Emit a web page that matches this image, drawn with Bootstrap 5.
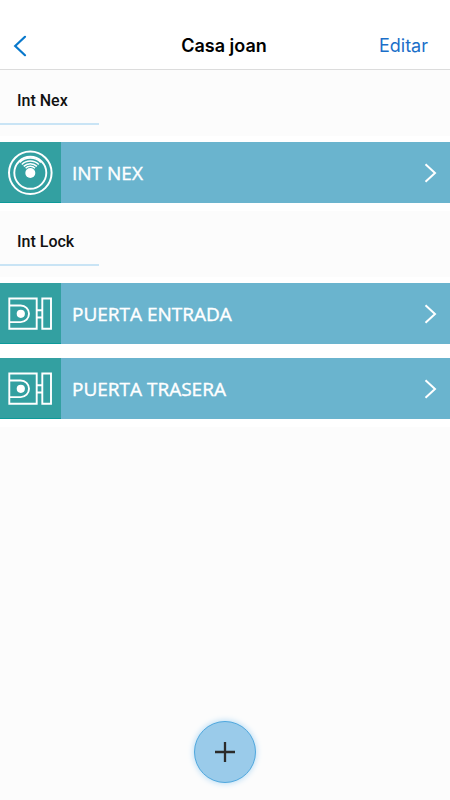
<!DOCTYPE html>
<html lang="es">
<head>
<meta charset="utf-8">
<meta name="viewport" content="width=device-width, initial-scale=1">
<title>Casa joan</title>
<link href="https://cdn.jsdelivr.net/npm/bootstrap@5.3.0/dist/css/bootstrap.min.css" rel="stylesheet">
<style>
  body { background: #fcfcfc; color: #111; }
  .top-bar { height: 70px; padding: 22px 22px 0 12px; border-bottom: 1px solid #dcdcdc; font-family: Inter, sans-serif; font-size: 18px; line-height: 24px; }
  .top-title { font-size: 18px; line-height: 24px; font-weight: 600; color: #000; }
  .edit-link { color: #1b6fc9; }
  .section-title { height: 55px; margin-bottom: 11px; padding: 19px 0 0 17px; width: 99px; border-bottom: 2px solid #c9e4f5; font: 500 16px/24px Roboto, sans-serif; white-space: nowrap; }
  .device-list { gap: 14px; padding: 6px 0 8px; }
  .device { height: 61px; background: #6ab4ce; color: #fff; font: 400 19px/24px "Open Sans", sans-serif; -webkit-text-stroke: 0.4px #fff; padding-right: 13px; }
  .device:hover { color: #fff; }
  .device-icon { width: 61px; background: #33a0a1; box-shadow: inset 0 -1px #0d9a9a; margin-right: 11px; }
  .add-btn { width: 62px; height: 62px; margin-bottom: 17px; background: #9acbea; border: 1px solid #50a8de; box-shadow: 0 0 6px #a9d5f3; }
</style>
<script src="https://cdn.jsdelivr.net/npm/bootstrap@5.3.0/dist/js/bootstrap.bundle.min.js" defer></script>
</head>
<body class="d-flex flex-column min-vh-100">
<svg class="d-none" aria-hidden="true">
  <symbol id="lock" viewBox="0 0 61 61">
    <path d="M9.3 15.5H36.7V45.7H9.3ZM9.3 22.5H20.7a8.3 8.3 0 0 1 0 16.6H9.3M42.3 15.5H51V45.7H42.3ZM36.7 27.3H42.3M36.7 34.5H42.3" fill="none" stroke="#fff" stroke-width="1.9"/>
    <circle cx="20.8" cy="30.8" r="4.1" fill="#fff"/>
  </symbol>
  <symbol id="chevron" viewBox="0 0 14 20">
    <path d="M2.5 1.2L12 10L2.5 18.8" fill="none" stroke="#fff" stroke-width="2"/>
  </symbol>
</svg>
<header class="top-bar bg-white d-flex align-items-center">
  <div class="col d-flex">
    <a href="#" aria-label="Volver" class="d-flex">
      <svg width="16" height="24" viewBox="0 0 16 24" aria-hidden="true"><path d="M13 2.8L3.2 12L13 21.2" fill="none" stroke="#0878cc" stroke-width="2.2" stroke-linecap="round"/></svg>
    </a>
  </div>
  <h1 class="top-title m-0 ps-2">Casa joan</h1>
  <div class="col text-end"><a href="#" class="edit-link text-decoration-none">Editar</a></div>
</header>
<main class="flex-grow-1 d-flex flex-column">
  <section>
    <h2 class="section-title">Int Nex</h2>
    <div class="device-list bg-white d-flex flex-column">
      <a href="#" class="device d-flex align-items-center text-decoration-none">
        <span class="device-icon h-100 flex-shrink-0">
          <svg width="61" height="61" viewBox="0 0 61 61" aria-hidden="true">
            <g fill="none" stroke="#fff">
              <circle cx="30.3" cy="30.8" r="21.3" stroke-width="2"/>
              <circle cx="30.3" cy="30.8" r="16" stroke-width="1.9"/>
              <path d="M19.7 20.4a15 15 0 0 1 21.2 0M21.8 22.5a12 12 0 0 1 17 0M23.7 24.4a9.3 9.3 0 0 1 13.2 0M25.6 26.3a6.6 6.6 0 0 1 9.4 0" stroke-width="1.5"/>
            </g>
            <circle cx="30.3" cy="31" r="5" fill="#fff"/>
          </svg>
        </span>
        <span class="flex-grow-1">INT NEX</span>
        <svg width="14" height="20" aria-hidden="true"><use href="#chevron"/></svg>
      </a>
    </div>
  </section>
  <section>
    <h2 class="section-title">Int Lock</h2>
    <div class="device-list bg-white d-flex flex-column">
      <a href="#" class="device d-flex align-items-center text-decoration-none">
        <span class="device-icon h-100 flex-shrink-0"><svg width="61" height="61" aria-hidden="true"><use href="#lock"/></svg></span>
        <span class="flex-grow-1">PUERTA ENTRADA</span>
        <svg width="14" height="20" aria-hidden="true"><use href="#chevron"/></svg>
      </a>
      <a href="#" class="device d-flex align-items-center text-decoration-none">
        <span class="device-icon h-100 flex-shrink-0"><svg width="61" height="61" aria-hidden="true"><use href="#lock"/></svg></span>
        <span class="flex-grow-1">PUERTA TRASERA</span>
        <svg width="14" height="20" aria-hidden="true"><use href="#chevron"/></svg>
      </a>
    </div>
  </section>
  <button type="button" aria-label="Añadir" class="add-btn rounded-circle mt-auto mx-auto p-0 d-flex align-items-center justify-content-center">
    <svg width="22" height="22" viewBox="0 0 22 22" aria-hidden="true"><path d="M11 1V21M1 11H21" stroke="#2b2b2b" stroke-width="2.3"/></svg>
  </button>
</main>
</body>
</html>
